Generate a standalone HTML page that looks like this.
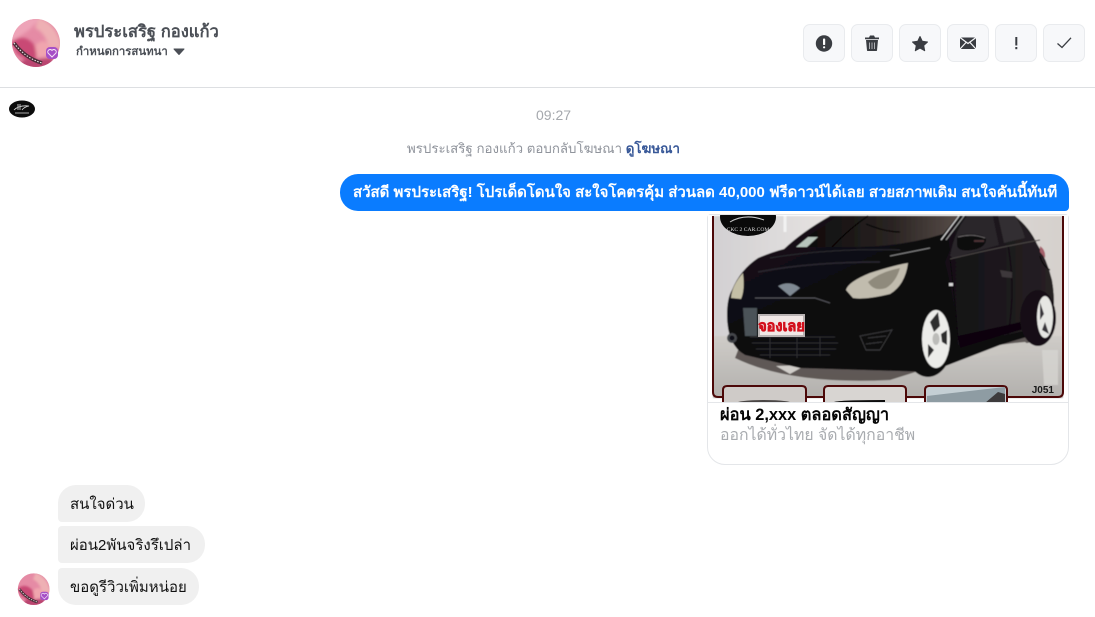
<!DOCTYPE html>
<html lang="th"><head><meta charset="utf-8"><title>Chat</title>
<style>
*{box-sizing:border-box}
html,body{margin:0;padding:0;background:#fff}
body{width:1095px;height:617px;overflow:hidden;position:relative;font-family:"Liberation Sans",Tahoma,"DejaVu Sans","Noto Sans CJK SC",sans-serif;color:#050505}
.a{position:absolute;white-space:nowrap}
.btn{position:absolute;top:24px;width:42px;height:38px;background:#f7f8fa;border:1px solid #e9ebee;border-radius:7px}
.btn svg{position:absolute;left:0;top:0;width:40px;height:36px}
.in{position:absolute;left:58px;height:37px;background:#f0f0f0;border-radius:18.5px;font-size:15px;line-height:39px;padding:0 12px;white-space:nowrap;color:#111}
</style></head><body>

<svg class="a" style="left:11px;top:18px" width="51" height="51" viewBox="0 0 51 51">
<defs><clipPath id="c1"><circle cx="25" cy="25" r="24"/></clipPath><filter id="b1"><feGaussianBlur stdDeviation="1.6"/></filter></defs>
<g clip-path="url(#c1)">
<rect width="51" height="51" fill="#e58ba5"/>
<g filter="url(#b1)">
<path d="M0 0H30L18 12L0 24Z" fill="#eea4b8"/>
<path d="M28 0Q46 6 51 30L38 30Q34 14 24 10Z" fill="#eeb0b4"/>
<path d="M0 24Q14 14 24 28Q28 38 22 46L6 36Z" fill="#c94a75"/>
<path d="M24 28Q32 18 39 28Q41 34 36 38L26 40Z" fill="#f0a5ae"/>
<path d="M0 40L22 51H0Z" fill="#9d3358"/>
<path d="M12 42L42 40L40 51H8Z" fill="#b94470"/>
</g>
<path d="M3 25Q14 40 31 45" stroke="#3a2a30" stroke-width="3.6" opacity=".85" fill="none"/>
<path d="M3 25Q14 40 31 45" stroke="#eee" stroke-width="1" stroke-dasharray="1.5 1.5" fill="none"/>
</g>
<rect x="35" y="29" width="12" height="12" rx="4" fill="#a64fc6"/>
<path d="M41 39l-4-4a2.400 2.400 0 0 1 4-2.600a2.400 2.400 0 0 1 4 2.600z" fill="#a64fc6" stroke="#f6e4f6" stroke-width="1"/>
</svg>

<div class="a" style="left:74px;top:21px;font-size:16.6px;line-height:21px;font-weight:bold;color:#4b4f56">พรประเสริฐ กองแก้ว</div>
<div class="a" style="left:76px;top:45px;font-size:11.4px;line-height:14px;font-weight:bold;color:#4b4f56">กำหนดการสนทนา</div>
<svg class="a" style="left:173px;top:48px" width="12" height="8" viewBox="0 0 12 8"><path d="M1 1H11L6 6.500Z" fill="#4b4f56" stroke="#4b4f56" stroke-linejoin="round"/></svg>

<div class="btn" style="left:803px"><svg viewBox="0 0 40 36"><circle cx="20" cy="18.500" r="8.200" fill="#3a3d42"/><rect x="19" y="13.500" width="2.200" height="6.500" rx=".8" fill="#fff"/><rect x="19" y="21.200" width="2.200" height="2.200" rx="1" fill="#fff"/></svg></div>
<div class="btn" style="left:851px"><svg viewBox="0 0 40 36"><path d="M13 12.500H27V14.200H13ZM17 12.500L18 10.500H22L23 12.500Z" fill="#3a3d42"/><path d="M14 15H26L25 25.500Q24.900 26 24.300 26H15.700Q15.100 26 15 25.500Z" fill="#3a3d42"/><path d="M17.500 17.500V24M20 17.500V24M22.500 17.500V24" stroke="#aeb0b4" stroke-width="1"/></svg></div>
<div class="btn" style="left:899px"><svg viewBox="0 0 40 36"><path d="M20 11.500L22.300 16.300L27.500 17L23.700 20.500L24.700 25.700L20 23.100L15.300 25.700L16.300 20.500L12.500 17L17.700 16.300Z" fill="#3a3d42" stroke="#3a3d42" stroke-width="1" stroke-linejoin="round"/></svg></div>
<div class="btn" style="left:947px"><svg viewBox="0 0 40 36"><rect x="12" y="12.500" width="16" height="11.500" rx="1" fill="#3a3d42"/><path d="M12 12.500L20 18.500L28 12.500M12 24L18 17.500M28 24L22 17.500" stroke="#f7f8fa" stroke-width="1.200" fill="none"/></svg></div>
<div class="btn" style="left:995px"><svg viewBox="0 0 40 36"><rect x="19.300" y="12" width="2" height="8.500" fill="#3a3d42"/><rect x="19.300" y="22" width="2" height="2.200" fill="#3a3d42"/></svg></div>
<div class="btn" style="left:1043px"><svg viewBox="0 0 40 36"><path d="M13.500 18.500L18 22.500L27 12.800" stroke="#3a3d42" stroke-width="1.300" fill="none"/></svg></div>

<div class="a" style="left:0;top:87px;width:1095px;height:1px;background:#dddfe2"></div>

<svg class="a" style="left:9px;top:100px" width="26" height="18" viewBox="0 0 26 18"><ellipse cx="13" cy="9" rx="13" ry="8.500" fill="#0c0c0c"/><path d="M5 10Q10 5 20 6Q15 7 13 10" stroke="#ddd" stroke-width=".8" fill="none"/><path d="M9 4V10M11 4V10" stroke="#bbb" stroke-width="1"/><path d="M6 13H20" stroke="#aaa" stroke-width="1"/></svg>

<div class="a" style="left:536px;top:107px;font-size:14px;line-height:17px;color:#a5a8ad">09:27</div>
<div class="a" style="left:407px;top:141px;font-size:13.3px;line-height:16px;color:#90949c">พรประเสริฐ กองแก้ว ตอบกลับโฆษณา <span style="color:#385898;font-weight:bold">ดูโฆษณา</span></div>

<div class="a" style="left:340px;top:174px;width:729px;height:37px;background:#0a7cff;border-radius:18px 18px 4px 18px;color:#fff;font-size:14.97px;font-weight:bold;line-height:38px;padding-left:13px;overflow:hidden">สวัสดี พรประเสริฐ! โปรเด็ดโดนใจ สะใจโคตรคุ้ม ส่วนลด 40,000 ฟรีดาวน์ได้เลย สวยสภาพเดิม สนใจคันนี้ทันที</div>

<div class="a" style="left:707px;top:214px;width:362px;height:251px;border:1px solid #e4e6e9;border-radius:4px 4px 18px 18px;background:#fff"></div>

<svg class="a" style="left:708px;top:215px" width="360" height="188" viewBox="708 215 360 188">
<defs>
<linearGradient id="wall" x1="0" x2="1" y1="0" y2="0"><stop offset="0" stop-color="#d2d0d2"/><stop offset=".3" stop-color="#e4e1e0"/><stop offset="1" stop-color="#d6d1cd"/></linearGradient>
<linearGradient id="floor" x1="0" x2="0" y1="0" y2="1"><stop offset="0" stop-color="#cfccc8"/><stop offset="1" stop-color="#b2b0ad"/></linearGradient>
<linearGradient id="body" x1="0" x2="1" y1="0" y2="1"><stop offset="0" stop-color="#17151a"/><stop offset=".55" stop-color="#0b0a0d"/><stop offset="1" stop-color="#141114"/></linearGradient>
<linearGradient id="side" x1="0" x2="1" y1="0" y2="0"><stop offset="0" stop-color="#121015"/><stop offset="1" stop-color="#272124"/></linearGradient>
<linearGradient id="glass" x1="0" x2="1" y1="0" y2="0"><stop offset="0" stop-color="#0a090a"/><stop offset=".6" stop-color="#2a2422"/><stop offset="1" stop-color="#574c48"/></linearGradient>
<filter id="s"><feGaussianBlur stdDeviation=".55"/></filter>
</defs>
<rect x="708" y="215" width="360" height="188" fill="#fff"/>
<g filter="url(#s)">
<rect x="713" y="216" width="350" height="127" fill="url(#wall)"/>
<rect x="713" y="336" width="350" height="62" fill="url(#floor)"/>
<path d="M785 216V232" stroke="#f2f2f2" stroke-width="3"/>
<!-- ground shadow -->
<path d="M735 358Q790 385 890 380L960 358L1050 338L1040 325L740 345Z" fill="#4d4744" opacity=".85"/>
<path d="M776 366L806 365L790 374Z" fill="#d0cdc9"/>
<path d="M962 353Q990 345 1025 342L1035 349L975 358Z" fill="#c9c6c1"/>
<path d="M1042 350H1058V385H1044Z" fill="#d6d4d1" opacity=".8"/>
<!-- whole body -->
<path d="M784 249Q802 232 830 216H1015Q1030 228 1037 244Q1050 265 1053 287Q1056 310 1050 330L1000 345L930 372L800 368L745 355Q727 345 727 315Q727 298 732 290Q740 270 758 258Q772 252 784 249Z" fill="url(#body)"/>
<path d="M945 262Q955 300 958 345L1048 326Q1056 300 1052 280Q1040 240 1015 216H945L950 250Z" fill="url(#side)"/>
<!-- windshield -->
<path d="M794 247Q815 230 840 216H958L943 234Q905 246 860 247Z" fill="url(#glass)"/>
<path d="M796 247L808 237H818L807 247Z" fill="#b7c4bc"/>
<path d="M832 247Q850 228 868 216M866 224Q885 232 900 232" stroke="#050505" stroke-width="1.200" fill="none"/>
<path d="M941 240L959 216" stroke="#d5d5d5" stroke-width="1.200"/>
<path d="M946 240L964 216" stroke="#aaa" stroke-width="1"/>
<!-- side windows -->
<path d="M950 256Q955 230 967 216H993Q996 232 999 245L953 258Z" fill="#29252a"/>
<path d="M998 216H1015Q1022 226 1025 238L1004 243Z" fill="#332e30"/>
<!-- mirror -->
<path d="M957 238Q958 234 972 234Q986 235 986 240Q985 248 972 250Q958 252 957 245Z" fill="#0a090b"/>
<path d="M958 237Q972 233 985 238" stroke="#6a6668" stroke-width="1" fill="none"/>
<path d="M974 241H984" stroke="#4a3034" stroke-width="2"/>
<!-- taillight -->
<path d="M1040 246Q1046 250 1045 258L1040 252Z" fill="#a4606a"/>
<path d="M1040 256Q1042 265 1050 270" stroke="#050505" stroke-width="1" fill="none"/>
<!-- hood highlights -->
<path d="M758 272Q810 262 880 262" stroke="#2a2830" stroke-width="1.500" fill="none"/>
<path d="M770 258Q830 248 900 250" stroke="#2c2a30" stroke-width="1" fill="none"/>
<path d="M890 256L930 248" stroke="#8a8a8a" stroke-width="1"/>
<path d="M778 286Q790 280 800 288L790 296Z" fill="#7f8993"/>
<path d="M755 298H815L830 303" stroke="#55555a" stroke-width="1" fill="none"/>
<!-- headlights -->
<path d="M846 290Q848 282 870 273Q895 265 908 263Q905 285 890 294Q865 300 853 298Z" fill="#c1bcae"/>
<path d="M868 282Q880 272 900 268Q896 282 886 288Q874 292 868 282Z" fill="#8f8a7c"/>
<path d="M731 298Q732 285 743 273Q745 290 741 299Z" fill="#c4bfa6"/>
<!-- plate -->
<path d="M743 308H757V336H745Z" fill="#4c5358"/>
<!-- grille -->
<g stroke="#2e2e32" stroke-width="1" fill="none">
<path d="M750 337H835M752 343H838M756 349H836M760 355H830"/>
<path d="M770 337V358M797 337V358M820 337V356"/>
</g>
<circle cx="732" cy="338" r="5" fill="#44474b"/><circle cx="732" cy="338" r="2.500" fill="#101012"/>
<path d="M860 336L892 330L880 350H866Z" fill="#0a090b" stroke="#3a3a3c"/>
<path d="M868 338L886 336M866 344L882 342" stroke="#3a3a3c"/>
<!-- body lines -->
<path d="M950 258Q955 300 958 340M1008 245Q1016 290 1008 335" stroke="#070607" stroke-width="1" fill="none"/>
<path d="M950 259Q1000 247 1040 240" stroke="#4d4847" stroke-width="1" fill="none"/>
<path d="M1000 270L1012 272V278L1002 277Z" fill="#3d393b"/>
<rect x="949" y="283" width="4" height="3" fill="#d8d8d8"/>
<path d="M958 336L1030 320V327L960 348Z" fill="#070607"/>
<!-- front wheel -->
<ellipse cx="928" cy="340" rx="25" ry="37" fill="#0e0d0e"/>
<ellipse cx="936" cy="339" rx="14" ry="29" fill="#ecece9"/>
<path d="M930 322L938 312L940 326L934 332ZM928 344L934 350L928 358ZM941 334L947 330L947 345L942 342Z" fill="#2e2d2f"/>
<ellipse cx="936" cy="339" rx="3.500" ry="6" fill="#bcbcb9"/>
<!-- rear wheel -->
<ellipse cx="1038" cy="318" rx="18" ry="28" fill="#121112"/>
<ellipse cx="1045" cy="317" rx="8" ry="21" fill="#e6e6e3"/>
<path d="M1044 314L1040 302V320ZM1045 322L1049 334L1042 330Z" fill="#37363a"/>
</g>
<path d="M713 216V392Q713 397 718 397H1058Q1063 397 1063 392V216" fill="none" stroke="#4c0808" stroke-width="2"/>
<!-- logo -->
<ellipse cx="748" cy="217" rx="28" ry="19" fill="#0a0a0a"/>
<path d="M730 222Q745 213 764 220" stroke="#ccc" stroke-width="1" fill="none"/>
<text x="748" y="231" font-size="5.600" font-family="Liberation Serif,serif" fill="#ddd" text-anchor="middle">CKC 2 CAR.COM</text>
<!-- plate tag -->
<rect x="758" y="314" width="47" height="23" fill="#b9b3b3"/>
<rect x="760" y="316" width="43" height="19" fill="#f1e8e6"/>
<text x="781.500" y="331" font-size="14.500" font-weight="bold" fill="#d3101c" text-anchor="middle" stroke="#d3101c" stroke-width=".6" font-family="Liberation Sans,Tahoma,DejaVu Sans,sans-serif">จองเลย</text>
<text x="1054" y="393" font-size="10" font-weight="bold" fill="#1a1a1a" text-anchor="end">J051</text>
<!-- thumbs -->
<g stroke="#4c0808" stroke-width="2">
<path d="M723 403V390Q723 386 727 386H802Q806 386 806 390V403Z" fill="#cfcbc8"/>
<path d="M824 403V390Q824 386 828 386H902Q906 386 906 390V403Z" fill="#d8d5d2"/>
<path d="M925 403V390Q925 386 929 386H1003Q1007 386 1007 390V403Z" fill="#c4cfd4"/>
</g>
<ellipse cx="764" cy="404" rx="30" ry="4" fill="#4a4645"/>
<path d="M834 402Q840 400 885 400V403H834Z" fill="#0c0c0c"/>
<path d="M927 396Q960 392 1005 387V394L985 403H927Z" fill="#8e9ca3"/>
<path d="M985 403L998 392L1005 394V403Z" fill="#3d3b3c"/>
</svg>
<div class="a" style="left:708px;top:402px;width:360px;height:1px;background:#e4e6e9"></div>

<div class="a" style="left:720px;top:405px;font-size:16.400px;line-height:20px;font-weight:bold;color:#050505">ผ่อน 2,xxx ตลอดสัญญา</div>
<div class="a" style="left:720px;top:426px;font-size:15.800px;line-height:20px;color:#a8abaf">ออกได้ทั่วไทย จัดได้ทุกอาชีพ</div>

<div class="in" style="top:485px;width:87px;border-radius:18px 18px 18px 4px">สนใจด่วน</div>
<div class="in" style="top:526px;width:147px;border-radius:4px 18px 18px 4px">ผ่อน2พันจริงรึเปล่า</div>
<div class="in" style="top:568px;width:141px;border-radius:4px 18px 18px 18px">ขอดูรีวิวเพิ่มหน่อย</div>

<svg class="a" style="left:17px;top:573px" width="34" height="33" viewBox="0 0 51 51">
<defs><clipPath id="c2"><circle cx="25" cy="25" r="24.500"/></clipPath></defs>
<g clip-path="url(#c2)">
<rect width="51" height="51" fill="#e58ba5"/>
<g filter="url(#b1)">
<path d="M28 0Q46 6 51 30L38 30Q34 14 24 10Z" fill="#eeb0b4"/>
<path d="M0 24Q14 14 24 28Q28 38 22 46L6 36Z" fill="#c94a75"/>
<path d="M24 28Q32 18 39 28Q41 34 36 38L26 40Z" fill="#f0a5ae"/>
<path d="M12 42L42 40L40 51H8Z" fill="#b94470"/>
</g>
<path d="M3 25Q14 40 31 45" stroke="#3a2a30" stroke-width="4" opacity=".85" fill="none"/>
<path d="M3 25Q14 40 31 45" stroke="#eee" stroke-width="1.200" stroke-dasharray="2 2" fill="none"/>
</g>
<rect x="35" y="29" width="13" height="13" rx="4" fill="#a64fc6"/>
<path d="M41.500 40l-4.500-4.500a2.600 2.600 0 0 1 4.500-2.800a2.600 2.600 0 0 1 4.500 2.800z" fill="#a64fc6" stroke="#f6e4f6" stroke-width="1"/>
</svg>

</body></html>
